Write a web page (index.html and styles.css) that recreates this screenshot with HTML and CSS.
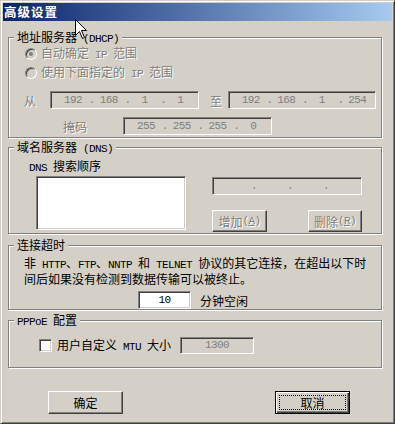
FILE: index.html
```html
<!DOCTYPE html>
<html>
<head>
    <meta charset="utf-8">
    <title>高级设置</title>
    <link rel="stylesheet" href="styles.css">
</head>
<body>
<div class="window">
    <div class="titlebar">高级设置</div>

    <div class="content">
        <!-- DHCP -->
        <div class="group g-dhcp">
            <span class="legend">地址服务器<span class="en"> (DHCP)</span></span>
            <div class="radio-row">
                <span class="radio checked"></span>
                <span class="dis">自动确定<span class="en"> IP </span>范围</span>
            </div>
            <div class="radio-row second">
                <span class="radio"></span>
                <span class="dis">使用下面指定的<span class="en"> IP </span>范围</span>
            </div>
            <div class="ip-row range">
                <span class="dis">从</span>
                <div class="ipbox from">
                    <span class="seg">192</span><span class="dot">.</span><span class="seg">168</span><span class="dot">.</span><span class="seg">1</span><span class="dot">.</span><span class="seg">1</span>
                </div>
                <span class="dis to-label">至</span>
                <div class="ipbox to">
                    <span class="seg">192</span><span class="dot">.</span><span class="seg">168</span><span class="dot">.</span><span class="seg">1</span><span class="dot">.</span><span class="seg">254</span>
                </div>
            </div>
            <div class="ip-row mask">
                <span class="dis">掩码</span>
                <div class="ipbox maskbox">
                    <span class="seg">255</span><span class="dot">.</span><span class="seg">255</span><span class="dot">.</span><span class="seg">255</span><span class="dot">.</span><span class="seg">0</span>
                </div>
            </div>
        </div>

        <!-- DNS -->
        <div class="group g-dns">
            <span class="legend">域名服务器<span class="en"> (DNS)</span></span>
            <div class="dns-label"><span class="en">DNS </span>搜索顺序</div>
            <div class="dns-row">
                <div class="listbox"></div>
                <div class="dns-side">
                    <div class="ipbox dnsbox">
                        <span class="seg"></span><span class="dot">.</span><span class="seg"></span><span class="dot">.</span><span class="seg"></span><span class="dot">.</span><span class="seg"></span>
                    </div>
                    <div class="dns-buttons">
                        <div class="btn small dis">增加<span class="en">(<u>A</u>)</span></div>
                        <div class="btn small dis">删除<span class="en">(<u>R</u>)</span></div>
                    </div>
                </div>
            </div>
        </div>

        <!-- timeout -->
        <div class="group g-timeout">
            <span class="legend">连接超时</span>
            <div class="note">
                非<span class="en"> HTTP</span>、<span class="en">FTP</span>、<span class="en">NNTP </span>和<span class="en"> TELNET </span>协议的其它连接，在超出以下时<br>
                间后如果没有检测到数据传输可以被终止。
            </div>
            <div class="idle-row">
                <div class="edit idle"><span class="en">10</span></div>
                <span class="idle-text">分钟空闲</span>
            </div>
        </div>

        <!-- PPPoE -->
        <div class="group g-pppoe">
            <span class="legend"><span class="en">PPPoE </span>配置</span>
            <div class="mtu-row">
                <span class="checkbox"></span>
                <span class="mtu-text">用户自定义<span class="en"> MTU </span>大小</span>
                <div class="edit mtu"><span class="en">1300</span></div>
            </div>
        </div>

        <div class="footer">
            <div class="btn ok">确定</div>
            <div class="btn cancel">取消</div>
        </div>
    </div>

    <svg class="cursor" width="13" height="21" viewBox="0 0 13 21">
        <path d="M0.5 0.5 V16.5 L4.5 12.5 L7.5 19.5 L9.5 18.5 L6.5 11.5 H11.5 Z" fill="#fff" stroke="#000"/>
    </svg>
</div>
</body>
</html>
```

FILE: styles.css
```css
body {
    margin: 0;
    background: #d4d0c8;
    font: 12px/13px "Noto Sans CJK SC", sans-serif;
    color: #000;
}

.en {
    font-family: "Liberation Mono", monospace;
    font-size: 11px;
    letter-spacing: -0.6px;
}

.dis {
    color: #808080;
    text-shadow: 1px 1px #fff;
}

/* window frame */
.window {
    position: relative;
    width: 395px;
    height: 424px;
    box-sizing: border-box;
    border: 1px solid;
    border-color: #d4d0c8 #404040 #404040 #d4d0c8;
    box-shadow: inset 1px 1px #fff, inset -1px -1px #808080;
    padding: 2px;
    background: #d4d0c8;
}

.titlebar {
    height: 18px;
    line-height: 18px;
    padding-left: 1px;
    background: linear-gradient(to right, #0a246a, #a6caf0);
    color: #fff;
    font-weight: bold;
    font-size: 12.5px;
    letter-spacing: 1px;
}

.content {
    padding-left: 5px;
}

/* group boxes */
.group {
    position: relative;
    width: 374px;
    box-sizing: border-box;
    border: 1px solid #808080;
    box-shadow: inset 1px 1px #fff, 1px 1px #fff;
}

.legend {
    position: absolute;
    top: -8px;
    left: 5px;
    padding: 0 3px;
    background: #d4d0c8;
    white-space: nowrap;
}

.g-dhcp {
    margin-top: 16px;
    height: 101px;
    padding-top: 9px;
}

.g-dns {
    margin-top: 9px;
    height: 87px;
    padding-top: 11px;
}

.g-timeout {
    margin-top: 11px;
    height: 65px;
    padding-top: 10px;
}

.g-pppoe {
    margin-top: 10px;
    height: 48px;
    padding-top: 16px;
}

/* radios */
.radio-row {
    display: flex;
    align-items: center;
    height: 13px;
    padding-left: 16px;
}

.radio-row.second {
    margin-top: 6px;
}

.radio {
    position: relative;
    width: 12px;
    height: 12px;
    box-sizing: border-box;
    border-radius: 50%;
    border: 1px solid;
    border-color: #808080 #fff #fff #808080;
    box-shadow: inset 1px 1px #404040, inset -1px -1px #d4d0c8;
    background: #d4d0c8;
    margin-right: 4px;
}

.radio.checked::after {
    content: "";
    position: absolute;
    left: 3px;
    top: 3px;
    width: 4px;
    height: 4px;
    border-radius: 50%;
    background: #808080;
}

/* ip fields */
.ip-row {
    display: flex;
    align-items: center;
    height: 18px;
}

.ip-row.range {
    margin-top: 12px;
    padding-left: 15px;
}

.ip-row.mask {
    margin-top: 8px;
    padding-left: 54px;
}

.ip-row.range .from {
    margin-left: 14px;
}

.to-label {
    margin-left: 11px;
}

.ip-row.range .to {
    margin-left: 6px;
    width: 148px;
}

.ip-row.mask .maskbox {
    margin-left: 36px;
}

.edit,
.ipbox,
.listbox,
.checkbox {
    box-sizing: border-box;
    border: 1px solid;
    border-color: #808080 #fff #fff #808080;
    box-shadow: inset 1px 1px #404040, inset -1px -1px #d4d0c8;
}

.ipbox {
    display: flex;
    align-items: center;
    width: 149px;
    height: 18px;
    padding: 0 2px 0 6px;
    color: #808080;
}

.seg {
    flex: 1;
    text-align: center;
    font-family: "Liberation Mono", monospace;
    font-size: 11px;
    letter-spacing: -0.6px;
}

.dot {
    width: 4px;
    text-align: center;
    font-family: "Liberation Mono", monospace;
    font-size: 11px;
}

/* dns */
.dns-label {
    padding-left: 20px;
}

.dns-row {
    display: flex;
    margin-top: 1px;
    padding-left: 27px;
}

.listbox {
    width: 150px;
    height: 54px;
    background: #fff;
}

.dns-side {
    margin-left: 26px;
    margin-top: 1px;
    width: 150px;
}

.dnsbox {
    width: 150px;
}

.dns-buttons {
    display: flex;
    justify-content: space-between;
    margin-top: 15px;
}

/* buttons */
.btn {
    display: flex;
    align-items: center;
    justify-content: center;
    box-sizing: border-box;
    height: 23px;
    width: 75px;
    border: 1px solid;
    border-color: #fff #404040 #404040 #fff;
    box-shadow: inset -1px -1px #808080, inset 1px 1px #d4d0c8;
}

.btn.small {
    height: 22px;
    width: 55px;
}

.btn.small + .btn.small {
    width: 54px;
}

/* timeout */
.note {
    padding-left: 15px;
}

.idle-row {
    display: flex;
    align-items: center;
    margin-top: 6px;
    padding-left: 129px;
}

.edit {
    display: flex;
    align-items: center;
    justify-content: center;
    height: 18px;
}

.idle {
    width: 53px;
    background: #fff;
}

.idle-text {
    margin-left: 9px;
}

/* pppoe */
.mtu-row {
    display: flex;
    align-items: center;
    height: 17px;
    padding-left: 30px;
}

.checkbox {
    width: 13px;
    height: 13px;
    background: #fff;
}

.mtu-text {
    margin-left: 5px;
}

.mtu {
    margin-left: 9px;
    width: 74px;
    height: 17px;
    color: #808080;
}

/* footer */
.footer {
    display: flex;
    margin-top: 23px;
}

.ok {
    margin-left: 40px;
}

.cancel {
    margin-left: 152px;
    border-color: #000;
    box-shadow: inset 1px 1px #fff, inset -1px -1px #404040, inset -2px -2px #808080;
    outline: 1px dotted #000;
    outline-offset: -5px;
}

.cursor {
    position: absolute;
    left: 74px;
    top: 18px;
}
```
